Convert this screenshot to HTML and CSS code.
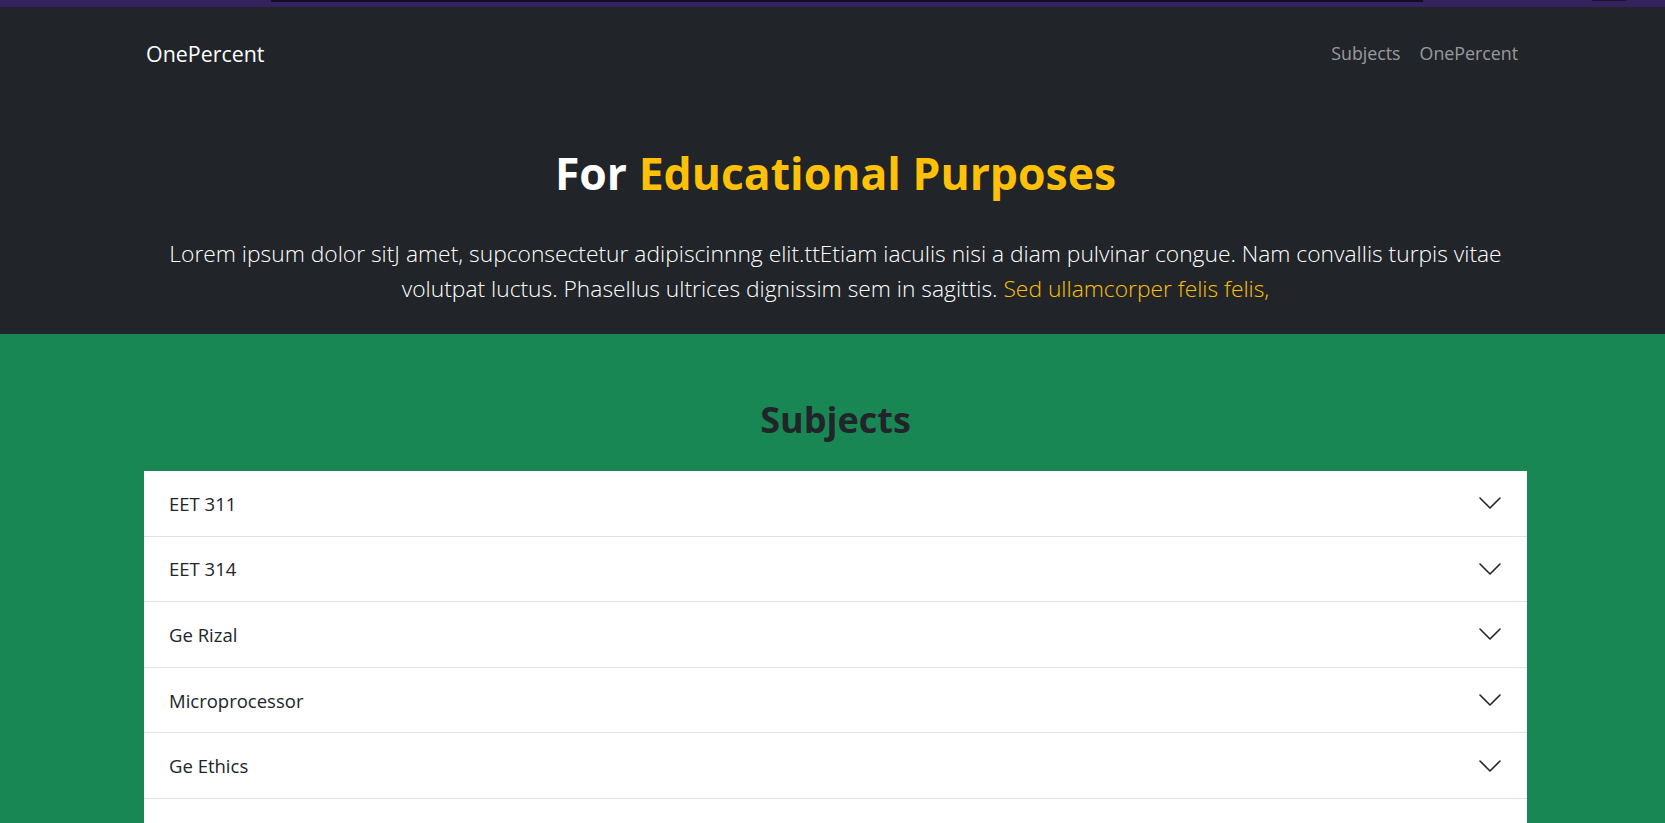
FILE: index.html
```html
<!DOCTYPE html>
<html lang="en">
<head>
<meta charset="utf-8">
<title>OnePercent</title>
<link rel="stylesheet" href="styles.css">
</head>
<body>
<div class="topstrip">
  <span class="strip-bar"></span>
  <span class="strip-dot"></span>
</div>
<header class="dark">
  <nav class="navbar">
    <a class="brand" href="#">OnePercent</a>
    <ul class="nav-links">
      <li><a href="#">Subjects</a></li>
      <li><a href="#">OnePercent</a></li>
    </ul>
  </nav>
  <section class="hero">
    <h1 class="hero-title">For <span class="accent">Educational Purposes</span></h1>
    <p class="lead">Lorem ipsum dolor sitJ amet, supconsectetur adipiscinnng elit.ttEtiam iaculis nisi a diam pulvinar congue. Nam convallis turpis vitae<br>volutpat luctus. Phasellus ultrices dignissim sem in sagittis. <span class="accent">Sed ullamcorper felis felis,</span></p>
  </section>
</header>
<main class="subjects">
  <h2 class="subjects-title">Subjects</h2>
  <div class="accordion">
    <div class="acc-item"><span>EET 311</span><svg class="chev" viewBox="0 0 22 12"><path d="M1 1L11 11L21 1"/></svg></div>
    <div class="acc-item"><span>EET 314</span><svg class="chev" viewBox="0 0 22 12"><path d="M1 1L11 11L21 1"/></svg></div>
    <div class="acc-item"><span>Ge Rizal</span><svg class="chev" viewBox="0 0 22 12"><path d="M1 1L11 11L21 1"/></svg></div>
    <div class="acc-item"><span>Microprocessor</span><svg class="chev" viewBox="0 0 22 12"><path d="M1 1L11 11L21 1"/></svg></div>
    <div class="acc-item"><span>Ge Ethics</span><svg class="chev" viewBox="0 0 22 12"><path d="M1 1L11 11L21 1"/></svg></div>
    <div class="acc-item acc-more"></div>
  </div>
</main>
</body>
</html>
```

FILE: styles.css
```css
* { box-sizing: border-box; }
html, body { margin: 0; padding: 0; }
body {
  font-family: "Open Sans", "Noto Sans", sans-serif;
  background: #198754;
  color: #212529;
  overflow: hidden;
}
.topstrip {
  height: 7px;
  background: #34225e;
  position: relative;
}
.strip-bar {
  position: absolute;
  left: 271px;
  top: 0;
  width: 1152px;
  height: 2px;
  background: #140d24;
}
.strip-dot {
  position: absolute;
  left: 1592px;
  top: 0;
  width: 35px;
  height: 1px;
  background: #1e1530;
}
.dark {
  background: #212529;
  color: #fff;
}
.navbar {
  width: 1383px;
  margin-left: 144px;
  display: flex;
  justify-content: space-between;
  align-items: flex-start;
  padding-top: 31px;
}
.brand {
  color: #fff;
  text-decoration: none;
  font-size: 21.4px;
  line-height: 32px;
  padding-left: 2px;
}
.nav-links {
  list-style: none;
  margin: 0;
  padding: 0;
  display: flex;
}
.nav-links a {
  display: block;
  color: rgba(255,255,255,.55);
  text-decoration: none;
  font-size: 17.8px;
  line-height: 30px;
  padding: 0 9px 0 10px;
}
.hero {
  width: 1383px;
  margin-left: 144px;
  text-align: center;
  padding-top: 74px;
  padding-bottom: 28px;
}
.hero-title {
  margin: 0;
  font-size: 44.5px;
  font-weight: 700;
  line-height: 58px;
  color: #fff;
}
.accent { color: #ffc107; }
.lead {
  margin: 34px 0 0;
  font-size: 22.8px;
  font-weight: 300;
  line-height: 35px;
  color: #fff;
}
.subjects {
  width: 1383px;
  margin-left: 144px;
}
.subjects-title {
  margin: 0;
  padding-top: 62px;
  text-align: center;
  font-size: 36px;
  font-weight: 700;
  line-height: 48px;
  color: #212529;
}
.accordion {
  margin-top: 27px;
  background: #fff;
}
.acc-item {
  height: 65.6px;
  border-bottom: 1px solid #dee2e6;
  display: flex;
  align-items: center;
  justify-content: space-between;
  padding: 0 26px 0 25px;
  font-size: 18.5px;
  color: #212529;
}
.chev {
  width: 22px;
  height: 12px;
  fill: none;
  stroke: #212529;
  stroke-width: 1.6;
  stroke-linecap: round;
  stroke-linejoin: round;
}
```
